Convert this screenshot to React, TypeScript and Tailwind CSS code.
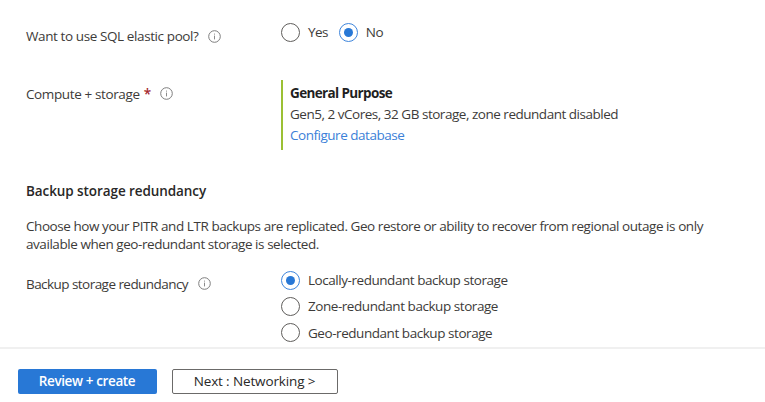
import type { ReactNode } from "react";

function InfoIcon() {
  return (
    <svg width="13" height="13" viewBox="0 0 13 13" fill="none" className="shrink-0">
      <circle cx="6.5" cy="6.5" r="5.8" stroke="#7d7d7d" strokeWidth="1" />
      <path d="M6.5 5.6V9.4M6.5 3.6V4.6" stroke="#8a8a8a" strokeWidth="1" />
    </svg>
  );
}

function Radio({ checked = false }: { checked?: boolean }) {
  return (
    <span
      className={
        checked
          ? "flex h-[19px] w-[19px] shrink-0 items-center justify-center rounded-full border border-[#3f86dc]"
          : "flex h-[19px] w-[19px] shrink-0 items-center justify-center rounded-full border border-[#605e5c]"
      }
    >
      {checked && <span className="h-[9px] w-[9px] rounded-full bg-[#2878d6]" />}
    </span>
  );
}

function Option({ checked, children }: { checked?: boolean; children: ReactNode }) {
  return (
    <label className="flex h-[26.3px] items-center gap-2">
      <Radio checked={checked} />
      {children}
    </label>
  );
}

export default function App() {
  return (
    <div className="flex h-[402px] w-[765px] flex-col overflow-hidden bg-white font-['Open_Sans','Noto_Sans',sans-serif] text-[13.5px] leading-[18px] text-[#3d3b39] whitespace-nowrap">
      <main className="h-[347px] shrink-0 overflow-hidden pl-[26px]">
        <div className="flex h-[80px] pt-[19px]">
          <div className="flex h-[34px] w-[255px] items-center gap-[9px]">
            <span className="tracking-[-0.4px]">Want to use SQL elastic pool?</span>
            <InfoIcon />
          </div>
          <div className="flex h-[27px] items-center gap-[11px]">
            <Option><span className="tracking-[-0.6px]">Yes</span></Option>
            <Option checked><span className="tracking-[-0.5px]">No</span></Option>
          </div>
        </div>

        <div className="flex h-[101px]">
          <div className="flex h-[27px] w-[255px] items-center">
            <span className="tracking-[-0.38px]">Compute + storage</span>
            <span className="ml-1 font-semibold text-[#a4262c]">*</span>
            <span className="ml-[9px]"><InfoIcon /></span>
          </div>
          <div className="h-[70px] border-l-2 border-[#9bc034] pt-[3px] pl-[7px] leading-[21px]">
            <div className="font-bold text-[#1f1f1f]"><span className="tracking-[-0.63px]">General Purpose</span></div>
            <div><span className="tracking-[-0.48px]">Gen5, 2 vCores, 32 GB storage, zone redundant disabled</span></div>
            <div><a className="tracking-[-0.48px] text-[#3b80d8]">Configure database</a></div>
          </div>
        </div>

        <h2 className="h-[36px] pt-px font-semibold text-[#292827]">
          <span className="tracking-[-0.08px]">Backup storage redundancy</span>
        </h2>
        <p className="h-[50px]">
          <span className="tracking-[-0.44px]">Choose how your PITR and LTR backups are replicated. Geo restore or ability to recover from regional outage is only</span>
          <br />
          <span className="tracking-[-0.44px]">available when geo-redundant storage is selected.</span>
        </p>

        <div className="flex">
          <div className="flex h-[33px] w-[255px] items-center gap-[10px]">
            <span className="tracking-[-0.55px]">Backup storage redundancy</span>
            <InfoIcon />
          </div>
          <div>
            <Option checked><span className="tracking-[-0.45px]">Locally-redundant backup storage</span></Option>
            <Option><span className="tracking-[-0.45px]">Zone-redundant backup storage</span></Option>
            <Option><span className="tracking-[-0.45px]">Geo-redundant backup storage</span></Option>
          </div>
        </div>
      </main>

      <footer className="flex grow gap-[15px] border-t-2 border-[#f0f0f0] pt-5 pl-[17.5px]">
        <button className="flex h-[25px] w-[139px] items-center justify-center rounded-[2px] bg-[#2878d6] pb-px font-semibold text-white">
          <span className="tracking-[-0.38px]">Review + create</span>
        </button>
        <button className="flex h-[25px] w-[166px] items-center justify-center rounded-[2px] border border-[#6b6a69] pb-px font-medium text-[#292827]">
          <span className="tracking-[-0.13px]">Next : Networking &gt;</span>
        </button>
      </footer>
    </div>
  );
}
